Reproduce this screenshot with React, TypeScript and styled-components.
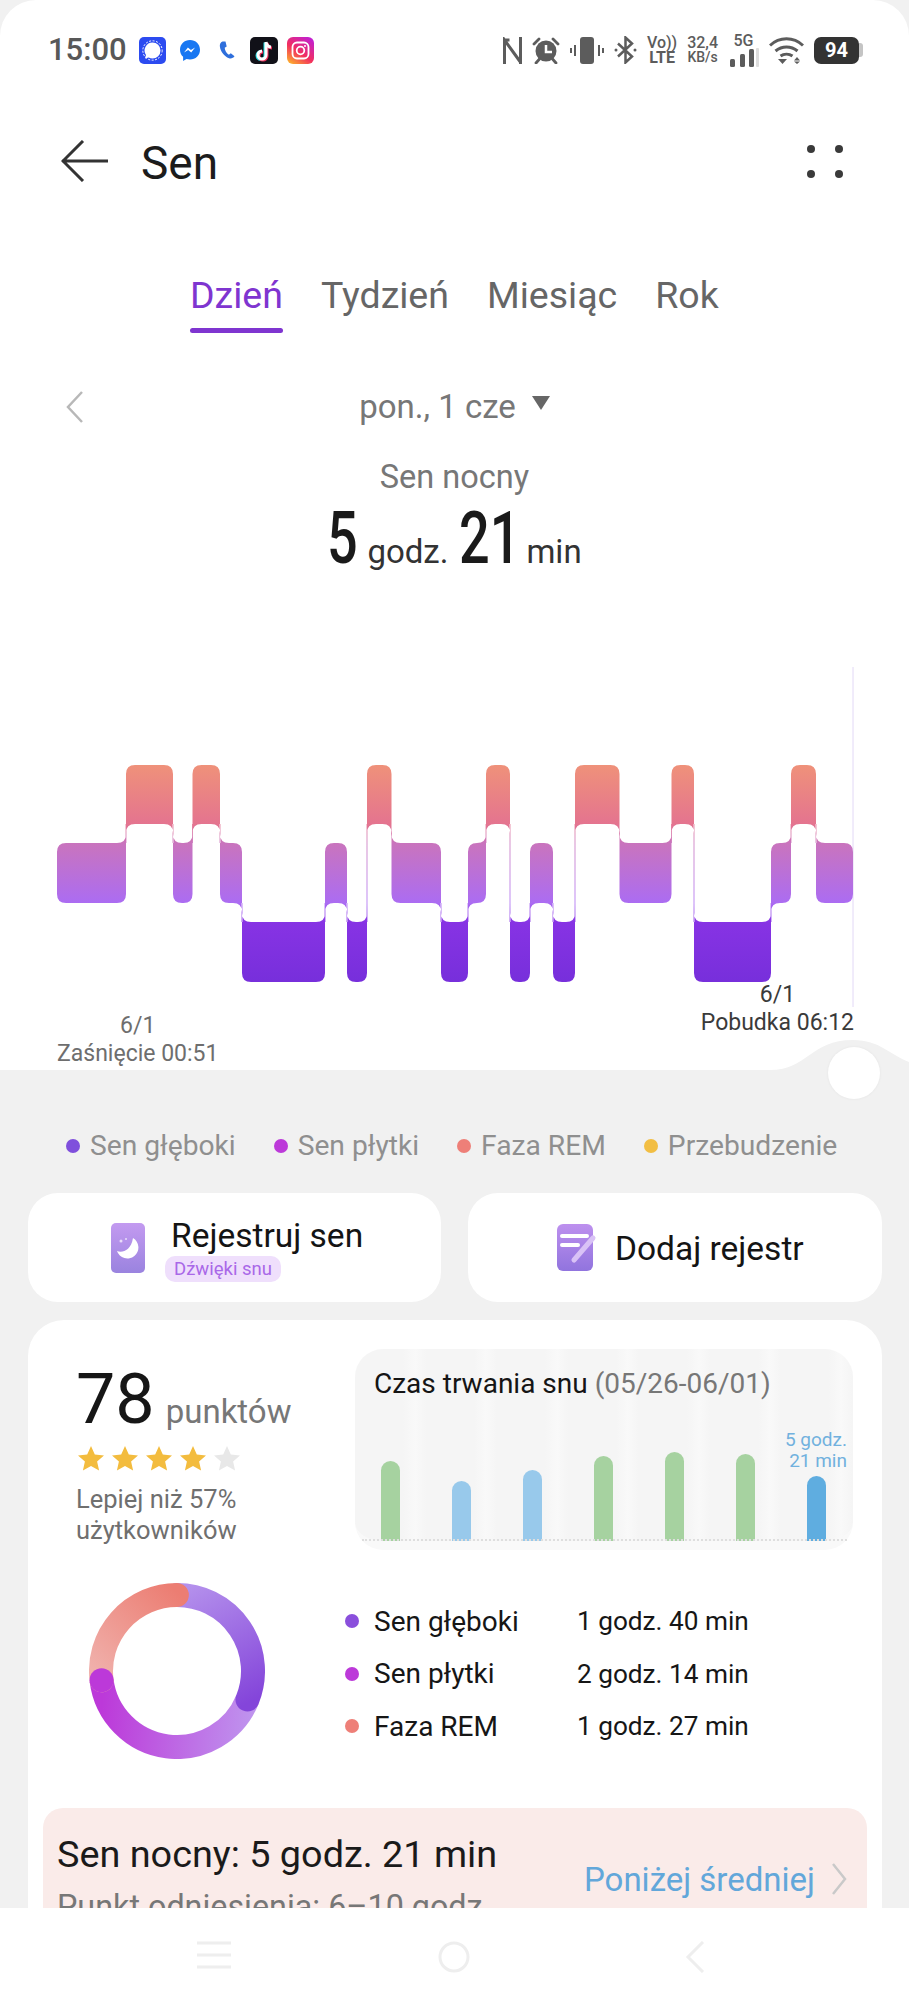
import React from 'react';
import styled, { createGlobalStyle } from 'styled-components';

const GlobalStyle = createGlobalStyle`
  * { box-sizing: border-box; }
  html, body { margin: 0; padding: 0; background: #f1f1f1; }
  body { font-family: Roboto, "Liberation Sans", sans-serif; color: #1a1a1a; }
`;

const Phone = styled.div`
  width: 909px;
  height: 2000px;
  display: flex;
  flex-direction: column;
  overflow: hidden;
  background: #f1f1f1;
`;
const Scroller = styled.div`
  flex: 1;
  min-height: 0;
  overflow: hidden;
`;
const TopPanel = styled.div`
  position: relative;
  height: 1070px;
  background: #fff;
  border-radius: 36px 36px 0 0;
`;
const StatusBar = styled.div`
  height: 100px;
  padding: 36px 46px 0 48px;
  display: flex;
  justify-content: space-between;
  align-items: flex-start;
  color: #5c5c5c;
`;
const StatusLeft = styled.div`
  display: flex;
  align-items: center;
  height: 28px;
`;
const Clock = styled.span`
  font-size: 31px;
  font-weight: 500;
  line-height: 28px;
  width: 91px;
  color: #585858;
`;
const AppIcons = styled.div`
  display: flex;
  align-items: center;
  gap: 9px;
`;
const StatusRight = styled.div`
  display: flex;
  align-items: center;
  height: 28px;
  gap: 10px;
`;
const TinyStack = styled.div`
  display: flex;
  flex-direction: column;
  align-items: center;
  font-weight: 500;
  line-height: 15px;
  color: #5c5c5c;
`;
const TinyTop = styled.span`
  font-size: 16px;
`;
const TinyBottom = styled.span<{ $bold?: boolean }>`
  font-size: ${({ $bold }) => ($bold ? 16 : 14)}px;
  font-weight: ${({ $bold }) => ($bold ? 700 : 500)};
`;
const Battery = styled.div`
  display: flex;
  align-items: center;
`;
const BatteryBody = styled.div`
  width: 45px;
  height: 27px;
  background: #333;
  border-radius: 7px;
  color: #fff;
  font-size: 20px;
  font-weight: 700;
  line-height: 27px;
  text-align: center;
`;
const BatteryTip = styled.div`
  width: 4px;
  height: 14px;
  background: #c4c4c4;
  border-radius: 0 3px 3px 0;
`;

const TopBar = styled.div`
  height: 122px;
  padding: 0 66px 0 61px;
  display: flex;
  align-items: center;
`;
const Title = styled.h1`
  margin: 3px 0 0 32px;
  flex: 1;
  font-size: 46px;
  font-weight: 400;
  color: #1c1c1c;
`;
const MoreDots = styled.div`
  display: grid;
  grid-template-columns: 8px 8px;
  column-gap: 20px;
  row-gap: 17px;
`;
const Dot = styled.span`
  width: 8px;
  height: 8px;
  border-radius: 50%;
  background: #3a3a3a;
`;

const Tabs = styled.div`
  margin-top: 51px;
  padding-left: 190px;
  display: flex;
  gap: 38px;
`;
const Tab = styled.div<{ $active?: boolean }>`
  display: flex;
  flex-direction: column;
  gap: 11px;
  font-size: 37.5px;
  line-height: 44px;
  color: ${({ $active }) => ($active ? '#7f35d0' : '#666')};
  &::after {
    content: '';
    height: 5px;
    border-radius: 3px;
    background: ${({ $active }) => ($active ? '#7f35d0' : 'transparent')};
  }
`;

const DateRow = styled.div`
  margin-top: 54px;
  height: 40px;
  padding-left: 66px;
  display: grid;
  grid-template-columns: 60px 1fr 126px;
  align-items: center;
`;
const DateLabel = styled.div`
  display: flex;
  justify-content: center;
  align-items: center;
  gap: 16px;
  font-size: 33px;
  line-height: 40px;
  color: #777;
`;
const Triangle = styled.span`
  width: 0;
  height: 0;
  margin-top: -8px;
  border-left: 9px solid transparent;
  border-right: 9px solid transparent;
  border-top: 14px solid #666;
`;
const Caption = styled.div`
  margin-top: 30px;
  font-size: 32.5px;
  line-height: 40px;
  text-align: center;
  color: #777;
`;
const Duration = styled.div`
  margin-top: 2px;
  display: flex;
  justify-content: center;
  align-items: baseline;
  gap: 11px;
  font-size: 33px;
  line-height: 80px;
  color: #333;
`;
const BigNumber = styled.span<{ $w: number }>`
  display: inline-block;
  width: ${({ $w }) => $w}px;
  font-size: 72px;
  font-weight: 500;
  color: #1a1a1a;
  white-space: nowrap;
  transform: scaleX(0.75);
  transform-origin: left;
`;

const SleepChart = styled.svg`
  display: block;
  margin-top: 68px;
  overflow: visible;
`;
const MarkerRow = styled.div`
  margin-top: -4px;
  padding: 0 55px 0 57px;
  display: flex;
  justify-content: space-between;
  align-items: flex-end;
`;
const Marker = styled.div<{ $raised?: boolean; $dark?: boolean }>`
  margin-bottom: ${({ $raised }) => ($raised ? 31 : 0)}px;
  font-size: 23px;
  line-height: 28px;
  text-align: center;
  color: ${({ $dark }) => ($dark ? '#3a3a3a' : '#6e6e6e')};
`;
const Hump = styled.svg`
  position: absolute;
  left: 770px;
  top: 1035px;
`;
const Knob = styled.div`
  position: absolute;
  left: 828px;
  top: 1047px;
  width: 52px;
  height: 52px;
  border-radius: 50%;
  background: #fff;
  box-shadow: 0 0 3px rgba(0, 0, 0, 0.06);
`;

const Legend = styled.div`
  margin-top: 58px;
  padding-left: 66px;
  display: flex;
  gap: 38px;
  font-size: 28.2px;
  line-height: 36px;
  color: #8f8f8f;
`;
const LegendItem = styled.div`
  display: flex;
  align-items: center;
  gap: 10px;
`;
const ColorDot = styled.span<{ $color: string }>`
  width: 14px;
  height: 14px;
  border-radius: 50%;
  background: ${({ $color }) => $color};
`;

const Actions = styled.div`
  margin-top: 29px;
  padding: 0 27px 0 28px;
  display: grid;
  grid-template-columns: 413px 414px;
  gap: 27px;
`;
const ActionCard = styled.div<{ $left: number; $gap: number }>`
  height: 109px;
  padding-left: ${({ $left }) => $left}px;
  background: #fff;
  border-radius: 30px;
  display: flex;
  align-items: center;
  gap: ${({ $gap }) => $gap}px;
`;
const ActionText = styled.div`
  margin-top: 3px;
  display: flex;
  flex-direction: column;
  align-items: flex-start;
  font-size: 33.5px;
  line-height: 40px;
  color: #141414;
`;
const ActionBadge = styled.span`
  margin: 0 0 0 -6px;
  padding: 0 9px;
  height: 26px;
  border-radius: 10px;
  background: #efdffc;
  font-size: 18.5px;
  line-height: 26px;
  color: #a968e8;
`;

const MainCard = styled.div`
  margin: 18px 27px 0 28px;
  height: 760px;
  padding-top: 29px;
  background: #fff;
  border-radius: 36px;
`;
const ScoreRow = styled.div`
  padding: 0 29px 0 48px;
  display: flex;
`;
const ScoreColumn = styled.div`
  width: 279px;
  padding-top: 15px;
`;
const ScoreLine = styled.div`
  display: flex;
  align-items: baseline;
  gap: 11px;
  line-height: 70px;
`;
const ScoreValue = styled.span`
  font-size: 70px;
  font-weight: 400;
  color: #161616;
`;
const ScoreUnit = styled.span`
  font-size: 33px;
  color: #777;
`;
const Stars = styled.div`
  margin: -1px 0 0 2px;
  display: flex;
  gap: 8px;
`;
const ScoreNote = styled.div`
  margin-top: 13px;
  font-size: 25.5px;
  line-height: 31px;
  color: #6f6f6f;
`;
const HistoryPanel = styled.div`
  width: 498px;
  height: 201px;
  display: flex;
  flex-direction: column;
  border-radius: 28px;
  border-bottom: 9px solid #f9f9f9;
  background: repeating-linear-gradient(90deg, #f5f5f5 0 48px, #f9f9f9 60px, #f5f5f5 71px);
`;
const HistoryTitle = styled.div`
  padding: 18px 0 0 19px;
  font-size: 28px;
  line-height: 34px;
  color: #151515;
`;
const HistoryRange = styled.span`
  color: #777;
`;
const Bars = styled.div`
  position: relative;
  flex: 1;
  display: flex;
  align-items: flex-end;
  &::after {
    content: '';
    position: absolute;
    left: 7px;
    right: 6px;
    bottom: 0;
    border-top: 2px dotted #dedede;
  }
`;
const BarCell = styled.div`
  width: 71px;
  display: flex;
  flex-direction: column;
  align-items: center;
`;
const BarLabel = styled.div`
  width: 100%;
  padding-right: 5px;
  margin-bottom: 5px;
  font-size: 19px;
  line-height: 21px;
  text-align: right;
  white-space: nowrap;
  color: #71b1de;
`;
const Bar = styled.div<{ $h: number; $color: string }>`
  width: 19px;
  height: ${({ $h }) => $h}px;
  border-radius: 10px 10px 0 0;
  background: ${({ $color }) => $color};
`;

const StagesRow = styled.div`
  margin-top: 33px;
  padding-left: 61px;
  display: flex;
  align-items: flex-start;
`;
const StageList = styled.div`
  margin: 12px 0 0 80px;
  display: grid;
  grid-template-columns: 14px 203px auto;
  column-gap: 15px;
  grid-auto-rows: 52.5px;
  align-items: center;
  font-size: 28px;
  color: #161616;
`;
const StageValue = styled.span`
  margin-left: -15px;
  font-size: 26.2px;
`;
const InsightBox = styled.div`
  margin: 49px 15px 0;
  height: 170px;
  padding: 24px 20px 0 14px;
  background: #faebe9;
  border-radius: 20px;
  display: flex;
  justify-content: space-between;
`;
const InsightTitle = styled.div`
  font-size: 37.8px;
  line-height: 44px;
  white-space: nowrap;
  color: #1a1a1a;
`;
const InsightNote = styled.div`
  margin-top: 13px;
  font-size: 32.3px;
  line-height: 36px;
  white-space: nowrap;
  color: #777;
`;
const InsightStatus = styled.div`
  margin-top: 27px;
  height: 40px;
  display: flex;
  align-items: center;
  gap: 16px;
  font-size: 33px;
  white-space: nowrap;
  color: #62a7da;
`;

const NavBar = styled.div`
  height: 92px;
  flex-shrink: 0;
  padding: 33px 204px 0 197px;
  background: #fff;
  display: flex;
  justify-content: space-between;
  align-items: flex-start;
`;

const rem = 0;
const mid = 1;
const deep = 2;
const levels = [
  { top: 765, bottom: 824 },
  { top: 843, bottom: 903 },
  { top: 922, bottom: 982 },
];
// x boundaries and sleep phase read off the hypnogram
const segments: [number, number, number][] = [
  [57, 126, mid], [126, 173, rem], [173, 192.5, mid], [192.5, 220, rem], [220, 242, mid],
  [242, 325, deep], [325, 347, mid], [347, 367, deep], [367, 391.5, rem], [391.5, 441, mid],
  [441, 468, deep], [468, 486, mid], [486, 510, rem], [510, 530, deep], [530, 553, mid],
  [553, 575, deep], [575, 619.5, rem], [619.5, 671.5, mid], [671.5, 694, rem], [694, 771, deep],
  [771, 791, mid], [791, 816, rem], [816, 853, mid],
];

const buildHypnogram = () => {
  const r = 9;
  let d = '';
  segments.forEach(([x0, x1, level], i) => {
    const { top, bottom } = levels[level];
    const prev = segments[i - 1]?.[2];
    const next = segments[i + 1]?.[2];
    const tl = prev !== undefined && prev < level ? 0 : r;
    const bl = prev !== undefined && prev > level ? 0 : r;
    const tr = next !== undefined && next < level ? 0 : r;
    const br = next !== undefined && next > level ? 0 : r;
    d += `M${x0 + tl} ${top}H${x1 - tr}Q${x1} ${top} ${x1} ${top + tr}V${bottom - br}Q${x1} ${bottom} ${x1 - br} ${bottom}H${x0 + bl}Q${x0} ${bottom} ${x0} ${bottom - bl}V${top + tl}Q${x0} ${top} ${x0 + tl} ${top}Z`;
    if (next !== undefined) {
      const upperOnRight = next < level;
      const upper = levels[Math.min(level, next)];
      const lower = levels[Math.max(level, next)];
      const du = upperOnRight ? 1 : -1;
      d += `M${x1 - 0.4} ${upper.bottom}H${x1 + 0.4}V${lower.top}H${x1 - 0.4}Z`;
      d += `M${x1 + du * r} ${upper.bottom}Q${x1} ${upper.bottom} ${x1} ${upper.bottom + r}V${upper.bottom}Z`;
      d += `M${x1 - du * r} ${lower.top}Q${x1} ${lower.top} ${x1} ${lower.top - r}V${lower.top}Z`;
    }
  });
  return d;
};

const polar = (angle: number, radius = 76, c = 88) => {
  const a = ((angle - 90) * Math.PI) / 180;
  return [c + radius * Math.cos(a), c + radius * Math.sin(a)];
};
const arc = (from: number, to: number) => {
  const [x0, y0] = polar(from);
  const [x1, y1] = polar(to);
  return `M${x0} ${y0}A76 76 0 ${to - from > 180 ? 1 : 0} 1 ${x1} ${y1}`;
};

const Donut = () => {
  const [capX, capY] = polar(263);
  return (
    <svg width="176" height="176" viewBox="0 0 176 176">
      <defs>
        <linearGradient id="donutDeep" gradientUnits="userSpaceOnUse" x1="88" y1="10" x2="150" y2="125">
          <stop offset="0" stopColor="#b490ec" />
          <stop offset="1" stopColor="#8445da" />
        </linearGradient>
        <linearGradient id="donutLight" gradientUnits="userSpaceOnUse" x1="165" y1="115" x2="15" y2="100">
          <stop offset="0" stopColor="#bf93ee" />
          <stop offset="1" stopColor="#bc39d9" />
        </linearGradient>
        <linearGradient id="donutRem" gradientUnits="userSpaceOnUse" x1="12" y1="95" x2="90" y2="10">
          <stop offset="0" stopColor="#f0b0ab" />
          <stop offset="1" stopColor="#ec7d72" />
        </linearGradient>
      </defs>
      <path d={arc(112, 263)} fill="none" stroke="url(#donutLight)" strokeWidth="24" />
      <path d={arc(0, 112)} fill="none" stroke="url(#donutDeep)" strokeWidth="24" strokeLinecap="round" />
      <path d={arc(263, 359.9)} fill="none" stroke="url(#donutRem)" strokeWidth="24" strokeLinecap="round" />
      <circle cx={capX} cy={capY} r="12" fill="#bc39d9" />
    </svg>
  );
};

const Star = ({ color }: { color: string }) => (
  <svg width="26" height="25" viewBox="0 0 26 25">
    <path d="M13 0l3.800 8.400 9.200 1-6.900 6.100 2 9L13 19.900 4.900 24.500l2-9L0 9.400l9.200-1z" fill={color} />
  </svg>
);

const SignalIcon = () => (
  <svg width="27" height="27" viewBox="0 0 27 27">
    <rect width="27" height="27" rx="5" fill="#2c4bf0" />
    <path d="M13.500 5.500a8 8 0 0 1 0 16c-1.400 0-2.700-.4-3.800-1l-3.700 1 1-3.500a8 8 0 0 1 6.500-12.500z" fill="#fff" />
    <circle cx="13.500" cy="13.500" r="9.700" fill="none" stroke="#fff" strokeWidth="1" strokeDasharray="2 1.500" />
  </svg>
);
const MessengerIcon = () => (
  <svg width="20" height="21" viewBox="0 0 20 21" style={{ margin: '0 9px 0 5px' }}>
    <path d="M10 0C4.400 0 0 4.100 0 9.700c0 2.900 1.200 5.400 3.100 7.100V21l3.400-1.900c1.100.3 2.300.4 3.500.4 5.600 0 10-4.200 10-9.800S15.600 0 10 0z" fill="#1877f2" />
    <path d="M4 12.500l3.900-5 3 2.500 4.200-2.500-3.900 5-3-2.500z" fill="#fff" />
  </svg>
);
const PhoneIcon = () => (
  <svg width="18" height="18" viewBox="0 0 18 18" style={{ marginRight: 5 }}>
    <path d="M4.500 0.500c-2 .8-3 2.700-2.600 5.200.6 4.500 4.300 9.800 9.100 11.500 2.200.7 4.400-.3 5.500-2l-3.700-2.900-1.900 1.400C8.500 12.300 6.800 9.400 6.700 6.700l2-1.200L7.500 0.500z" fill="#2f6fdc" />
  </svg>
);
const TikTokIcon = () => (
  <svg width="28" height="27" viewBox="0 0 28 27">
    <rect width="28" height="27" rx="5" fill="#111118" />
    <path d="M16 5v13a4 4 0 1 1-4-4M16 5c.6 3 2.500 4.800 5 5" fill="none" stroke="#25e0e6" strokeWidth="3" transform="translate(-1 .6)" />
    <path d="M16 5v13a4 4 0 1 1-4-4M16 5c.6 3 2.500 4.800 5 5" fill="none" stroke="#f0305c" strokeWidth="3" transform="translate(1 1)" />
    <path d="M16 5v13a4 4 0 1 1-4-4M16 5c.6 3 2.500 4.800 5 5" fill="none" stroke="#fff" strokeWidth="3" />
  </svg>
);
const InstagramIcon = () => (
  <svg width="27" height="27" viewBox="0 0 27 27">
    <defs>
      <linearGradient id="insta" x1="0.1" y1="1" x2="0.8" y2="0">
        <stop offset="0" stopColor="#fdb32b" />
        <stop offset="0.45" stopColor="#f2305e" />
        <stop offset="1" stopColor="#c21fd0" />
      </linearGradient>
    </defs>
    <rect width="27" height="27" rx="6" fill="url(#insta)" />
    <rect x="5.500" y="5.500" width="16" height="16" rx="4.500" fill="none" stroke="#fff" strokeWidth="1.800" />
    <circle cx="13.500" cy="13.500" r="3.800" fill="none" stroke="#fff" strokeWidth="1.800" />
    <circle cx="18" cy="9" r="1" fill="#fff" />
  </svg>
);

const NfcIcon = () => (
  <svg width="19" height="27" viewBox="0 0 19 27" fill="none" stroke="#5c5c5c" strokeWidth="3">
    <path d="M1.500 27V3L17 24.500M17.500 0v27M1.500 3h5" />
  </svg>
);
const AlarmIcon = () => (
  <svg width="28" height="27" viewBox="0 0 28 27">
    <circle cx="14" cy="14" r="10.500" fill="#5c5c5c" />
    <path d="M14 8v7h6" fill="none" stroke="#fff" strokeWidth="2.500" />
    <path d="M2 7l5-5M26 7l-5-5M4 26l3.500-4M24 26l-3.500-4" stroke="#5c5c5c" strokeWidth="2.800" strokeLinecap="round" />
  </svg>
);
const VibrateIcon = () => (
  <svg width="34" height="27" viewBox="0 0 34 27">
    <rect x="10" width="14" height="27" rx="3" fill="#5c5c5c" />
    <path d="M5 8v11M1 11v5M29 8v11M33 11v5" stroke="#5c5c5c" strokeWidth="2" />
  </svg>
);
const BluetoothIcon = () => (
  <svg width="23" height="28" viewBox="0 0 23 28" fill="none" stroke="#5c5c5c" strokeWidth="2.500">
    <path d="M4 7.500l14 13-6.500 6V1.500l6.500 6-14 13" />
    <circle cx="2" cy="14" r="1.500" fill="#5c5c5c" stroke="none" />
    <circle cx="21" cy="14" r="1.500" fill="#5c5c5c" stroke="none" />
  </svg>
);
const SignalBars = () => (
  <svg width="31" height="19" viewBox="0 0 31 19">
    <rect x="2" y="11" width="5" height="8" rx="1.500" fill="#5c5c5c" />
    <rect x="12" y="6" width="5" height="13" rx="1.500" fill="#5c5c5c" />
    <rect x="21" y="1" width="5" height="18" rx="1.500" fill="#5c5c5c" />
    <rect x="28" y="0" width="3" height="19" rx="1" fill="#ddd" />
  </svg>
);
const WifiIcon = () => (
  <svg width="35" height="27" viewBox="0 0 35 27" fill="none" stroke="#5c5c5c" strokeWidth="3">
    <path d="M1 8.500c9.500-9 23.500-9 33 0M6.500 14c6.500-5.500 15.500-5.500 22 0M11.500 19c3.500-2.500 8.500-2.500 12 0" />
    <path d="M13 22h9l-4.500 5z" fill="#5c5c5c" stroke="none" transform="translate(-4 0)" />
    <path d="M28 20l3 3.500h-6zM28 27l3-2.500h-6z" fill="#5c5c5c" stroke="none" />
  </svg>
);

const MoonCardIcon = () => (
  <svg width="34" height="50" viewBox="0 0 34 50">
    <defs>
      <linearGradient id="moonBg" x1="0" y1="0" x2="0" y2="1">
        <stop offset="0" stopColor="#c39af0" />
        <stop offset="1" stopColor="#9a83df" />
      </linearGradient>
    </defs>
    <rect width="34" height="50" rx="5" fill="url(#moonBg)" />
    <path d="M22 15a11 11 0 1 1-16 13c5 2 14 0 16-13z" fill="#fff" />
    <circle cx="10" cy="18" r="1.500" fill="#e9dcf9" />
    <circle cx="15" cy="16" r="1" fill="#e9dcf9" />
  </svg>
);
const NoteCardIcon = () => (
  <svg width="40" height="48" viewBox="0 0 40 48">
    <defs>
      <linearGradient id="noteBg" x1="0" y1="0" x2="0" y2="1">
        <stop offset="0" stopColor="#bd90ee" />
        <stop offset="1" stopColor="#9174de" />
      </linearGradient>
    </defs>
    <rect width="36" height="47" rx="6" fill="url(#noteBg)" />
    <path d="M5 12h25M5 21h16" stroke="#fff" strokeWidth="4" strokeLinecap="round" />
    <path d="M17 36l19-22" stroke="#d9c2f6" strokeWidth="5" strokeLinecap="round" />
  </svg>
);

const days: { h: number; color: string }[] = [
  { h: 80, color: '#a6d2a0' },
  { h: 60, color: '#98c9eb' },
  { h: 71, color: '#98c9eb' },
  { h: 85, color: '#a6d2a0' },
  { h: 89, color: '#a6d2a0' },
  { h: 87, color: '#a6d2a0' },
  { h: 65, color: '#5fade0' },
];

const stages = [
  { name: 'Sen głęboki', value: '1 godz. 40 min', color: '#8a4fdc' },
  { name: 'Sen płytki', value: '2 godz. 14 min', color: '#bc39d9' },
  { name: 'Faza REM', value: '1 godz. 27 min', color: '#ee7f78' },
];

export default function App() {
  return (
    <>
      <GlobalStyle />
      <Phone>
        <Scroller>
          <TopPanel>
            <StatusBar>
              <StatusLeft>
                <Clock>15:00</Clock>
                <AppIcons>
                  <SignalIcon />
                  <MessengerIcon />
                  <PhoneIcon />
                  <TikTokIcon />
                  <InstagramIcon />
                </AppIcons>
              </StatusLeft>
              <StatusRight>
                <NfcIcon />
                <AlarmIcon />
                <VibrateIcon />
                <BluetoothIcon />
                <TinyStack>
                  <TinyTop>Vo))</TinyTop>
                  <TinyBottom $bold>LTE</TinyBottom>
                </TinyStack>
                <TinyStack>
                  <TinyTop>32,4</TinyTop>
                  <TinyBottom>KB/s</TinyBottom>
                </TinyStack>
                <TinyStack>
                  <TinyTop>5G</TinyTop>
                  <SignalBars />
                </TinyStack>
                <WifiIcon />
                <Battery>
                  <BatteryBody>94</BatteryBody>
                  <BatteryTip />
                </Battery>
              </StatusRight>
            </StatusBar>

            <TopBar>
              <svg width="48" height="42" viewBox="0 0 48 42" fill="none" stroke="#333" strokeWidth="3">
                <path d="M1 21h46M22 1L2 21l20 20" />
              </svg>
              <Title>Sen</Title>
              <MoreDots>
                <Dot />
                <Dot />
                <Dot />
                <Dot />
              </MoreDots>
            </TopBar>

            <Tabs>
              <Tab $active>Dzień</Tab>
              <Tab>Tydzień</Tab>
              <Tab>Miesiąc</Tab>
              <Tab>Rok</Tab>
            </Tabs>

            <DateRow>
              <svg width="18" height="32" viewBox="0 0 18 32" fill="none" stroke="#b8b8b8" strokeWidth="2.500">
                <path d="M16 1L2 16l14 15" />
              </svg>
              <DateLabel>
                pon., 1 cze
                <Triangle />
              </DateLabel>
            </DateRow>

            <Caption>Sen nocny</Caption>
            <Duration>
              <BigNumber $w={29}>5</BigNumber>
              <span>godz.</span>
              <BigNumber $w={56}>21</BigNumber>
              <span>min</span>
            </Duration>

            <SleepChart width="909" height="325" viewBox="0 660 909 325">
              <defs>
                <linearGradient id="phases" gradientUnits="userSpaceOnUse" x1="0" y1="765" x2="0" y2="982">
                  <stop offset="0" stopColor="#ef917a" />
                  <stop offset="0.272" stopColor="#e4748f" />
                  <stop offset="0.36" stopColor="#c974bd" />
                  <stop offset="0.636" stopColor="#ab6cf2" />
                  <stop offset="0.724" stopColor="#8733e4" />
                  <stop offset="1" stopColor="#772fdb" />
                </linearGradient>
              </defs>
              <path d="M853 667V1007" stroke="#e2d8f6" strokeWidth="1" />
              <path d={buildHypnogram()} fill="url(#phases)" />
            </SleepChart>

            <MarkerRow>
              <Marker>
                6/1
                <br />
                Zaśnięcie 00:51
              </Marker>
              <Marker $raised $dark>
                6/1
                <br />
                Pobudka 06:12
              </Marker>
            </MarkerRow>

            <Hump width="139" height="40" viewBox="0 0 139 40">
              <path d="M0 35C38 35 40 5 83 5C110 5 120 20 139 27V40H0Z" fill="#f1f1f1" />
            </Hump>
            <Knob />
          </TopPanel>

          <Legend>
            <LegendItem>
              <ColorDot $color="#7f4fdc" />
              Sen głęboki
            </LegendItem>
            <LegendItem>
              <ColorDot $color="#bc39d9" />
              Sen płytki
            </LegendItem>
            <LegendItem>
              <ColorDot $color="#ee7f78" />
              Faza REM
            </LegendItem>
            <LegendItem>
              <ColorDot $color="#f2be43" />
              Przebudzenie
            </LegendItem>
          </Legend>

          <Actions>
            <ActionCard $left={83} $gap={26}>
              <MoonCardIcon />
              <ActionText>
                Rejestruj sen
                <ActionBadge>Dźwięki snu</ActionBadge>
              </ActionText>
            </ActionCard>
            <ActionCard $left={89} $gap={18}>
              <NoteCardIcon />
              <ActionText>Dodaj rejestr</ActionText>
            </ActionCard>
          </Actions>

          <MainCard>
            <ScoreRow>
              <ScoreColumn>
                <ScoreLine>
                  <ScoreValue>78</ScoreValue>
                  <ScoreUnit>punktów</ScoreUnit>
                </ScoreLine>
                <Stars>
                  <Star color="#f3bc3e" />
                  <Star color="#f3bc3e" />
                  <Star color="#f3bc3e" />
                  <Star color="#f3bc3e" />
                  <Star color="#e8e8e8" />
                </Stars>
                <ScoreNote>
                  Lepiej niż 57%
                  <br />
                  użytkowników
                </ScoreNote>
              </ScoreColumn>
              <HistoryPanel>
                <HistoryTitle>
                  Czas trwania snu <HistoryRange>(05/26-06/01)</HistoryRange>
                </HistoryTitle>
                <Bars>
                  {days.map((day, i) => (
                    <BarCell key={i}>
                      {i === days.length - 1 && (
                        <BarLabel>
                          5 godz.
                          <br />
                          21 min
                        </BarLabel>
                      )}
                      <Bar $h={day.h} $color={day.color} />
                    </BarCell>
                  ))}
                </Bars>
              </HistoryPanel>
            </ScoreRow>

            <StagesRow>
              <Donut />
              <StageList>
                {stages.map((stage) => (
                  <React.Fragment key={stage.name}>
                    <ColorDot $color={stage.color} />
                    <span>{stage.name}</span>
                    <StageValue>{stage.value}</StageValue>
                  </React.Fragment>
                ))}
              </StageList>
            </StagesRow>

            <InsightBox>
              <div>
                <InsightTitle>Sen nocny: 5 godz. 21 min</InsightTitle>
                <InsightNote>Punkt odniesienia: 6–10 godz.</InsightNote>
              </div>
              <InsightStatus>
                Poniżej średniej
                <svg width="16" height="32" viewBox="0 0 16 32" fill="none" stroke="#c9c9c9" strokeWidth="2.500">
                  <path d="M2 1l12 15L2 31" />
                </svg>
              </InsightStatus>
            </InsightBox>
          </MainCard>
        </Scroller>

        <NavBar>
          <svg width="34" height="28" viewBox="0 0 34 28" stroke="#eeeeee" strokeWidth="3">
            <path d="M0 2h34M0 14h34M0 26h34" />
          </svg>
          <svg width="32" height="32" viewBox="0 0 32 32" fill="none" stroke="#eeeeee" strokeWidth="3">
            <circle cx="16" cy="16" r="14" />
          </svg>
          <svg width="28" height="32" viewBox="-8 0 28 32" fill="none" stroke="#eeeeee" strokeWidth="3">
            <path d="M18 1L3 16l15 15" />
          </svg>
        </NavBar>
      </Phone>
    </>
  );
}
